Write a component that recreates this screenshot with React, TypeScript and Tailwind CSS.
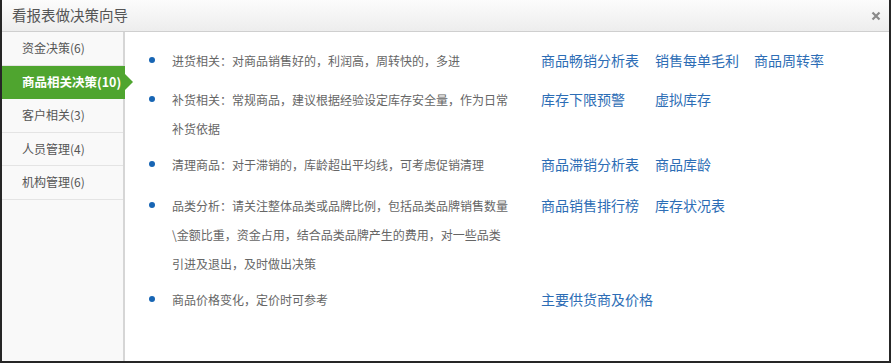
import React from "react";

const font = { fontFamily: '"Noto Sans CJK SC", "Noto Sans", sans-serif' };

const menu = [
  { label: "资金决策(6)" },
  { label: "商品相关决策(10)", active: true },
  { label: "客户相关(3)" },
  { label: "人员管理(4)" },
  { label: "机构管理(6)" },
];

// lines are broken where the reference breaks them
const rows = [
  {
    lines: ["进货相关：对商品销售好的，利润高，周转快的，多进"],
    links: ["商品畅销分析表", "销售每单毛利", "商品周转率"],
    gap: "mb-[10px]",
  },
  {
    lines: ["补货相关：常规商品，建议根据经验设定库存安全量，作为日常", "补货依据"],
    links: ["库存下限预警", "虚拟库存"],
    gap: "mb-[7px]",
  },
  {
    lines: ["清理商品：对于滞销的，库龄超出平均线，可考虑促销清理"],
    links: ["商品滞销分析表", "商品库龄"],
    gap: "mb-[12px]",
  },
  {
    lines: [
      "品类分析：请关注整体品类或品牌比例，包括品类品牌销售数量",
      "\\金额比重，资金占用，结合品类品牌产生的费用，对一些品类",
      "引进及退出，及时做出决策",
    ],
    links: ["商品销售排行榜", "库存状况表"],
    gap: "mb-[7px]",
  },
  {
    lines: ["商品价格变化，定价时可参考"],
    links: ["主要供货商及价格"],
    gap: "",
  },
];

export default function App() {
  return (
    <div
      className="w-[891px] h-[363px] bg-white border-l-2 border-r-2 border-b-2 border-[#262626] flex flex-col overflow-hidden [text-spacing-trim:space-all]"
      style={font}
    >
      <header className="h-[32px] shrink-0 flex items-center justify-between pl-[10px] pr-[7px] bg-gradient-to-b from-[#fcfcfc] to-[#ededed] border-b border-[#cfcfcf]">
        <span className="text-[14.5px] text-[#555] leading-none">看报表做决策向导</span>
        <svg width="10" height="10" viewBox="0 0 10 10" className="mr-[1px]">
          <path d="M1.5 1.5 L8.5 8.5 M8.5 1.5 L1.5 8.5" stroke="#8a8a8a" strokeWidth="2.2" />
        </svg>
      </header>

      <div className="flex flex-1 min-h-0">
        <aside className="w-[123px] shrink-0 bg-[#f9f9f9] border-r-2 border-[#d6d6d6]">
          {menu.map((m) =>
            m.active ? (
              <div
                key={m.label}
                className="relative h-[33.5px] flex items-center pl-[20px] bg-[#4fa52f] text-white font-bold text-[12.5px] whitespace-nowrap -mr-[2px]"
              >
                {m.label}
                <span className="absolute left-full top-1/2 -translate-y-1/2 w-0 h-0 border-y-[8px] border-y-transparent border-l-[8px] border-l-[#4fa52f]" />
              </div>
            ) : (
              <div
                key={m.label}
                className="h-[33.5px] flex items-center pl-[20px] text-[12px] text-[#555] border-b border-[#e4e4e4] whitespace-nowrap"
              >
                {m.label}
              </div>
            )
          )}
        </aside>

        <main className="flex-1 pt-[14px] pl-[24px]">
          {rows.map((r) => (
            <div key={r.lines[0]} className={`flex leading-[29px] ${r.gap}`}>
              <span className="w-[6px] h-[6px] rounded-full bg-[#1765b4] mt-[11px] shrink-0" />
              <div className="ml-[17px] w-[340px] shrink-0 text-[12px] text-[#666]">
                {r.lines.map((l) => (
                  <div key={l} className="whitespace-nowrap">
                    {l}
                  </div>
                ))}
              </div>
              <div className="ml-[29px] grid grid-cols-[114px_99px_auto] content-start">
                {r.links.map((l) => (
                  <a key={l} className="text-[14px] text-[#2d6db5] whitespace-nowrap cursor-pointer">
                    {l}
                  </a>
                ))}
              </div>
            </div>
          ))}
        </main>
      </div>
    </div>
  );
}
